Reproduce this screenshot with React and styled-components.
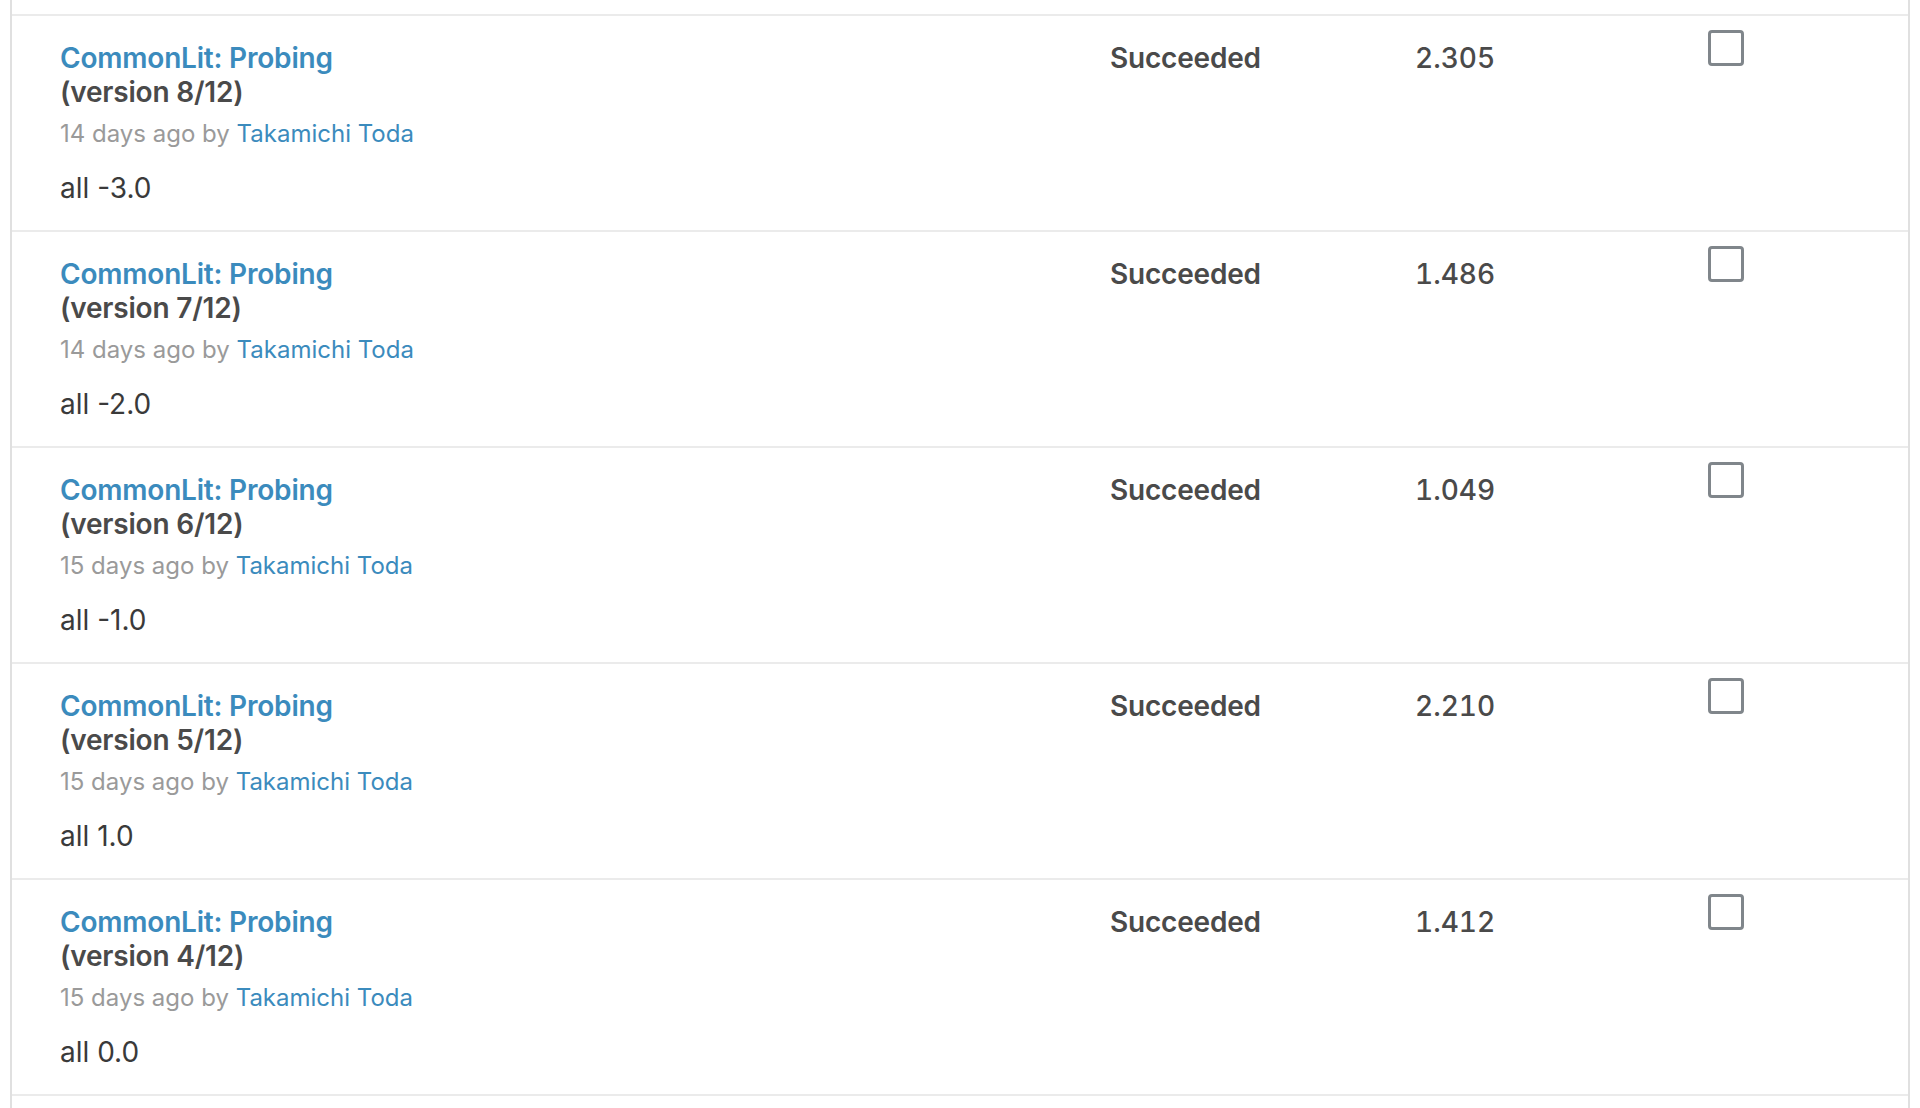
import React from "react";
import styled, { createGlobalStyle } from "styled-components";

const GlobalStyle = createGlobalStyle`
  html, body {
    margin: 0;
    padding: 0;
    background: #ffffff;
  }
  body {
    font-family: Inter, "Noto Sans", sans-serif;
    -webkit-font-smoothing: antialiased;
  }
`;

const Page = styled.div`
  height: 1108px;
  overflow: hidden;
  background: #fff;
`;

const List = styled.div`
  margin: 0 10px;
  min-height: 1108px;
  padding-top: 14px;
  border-left: 2px solid #e0e0e0;
  border-right: 2px solid #e0e0e0;
`;

const Row = styled.div`
  display: grid;
  grid-template-columns: 1050px 305px 293px 36px 1fr;
  padding: 25px 0 25px 48px;
  border-top: 2px solid #ebebeb;
  &:last-child {
    border-bottom: 2px solid #ebebeb;
  }
`;

const Info = styled.div`
  display: flex;
  flex-direction: column;
`;

const Title = styled.a`
  font-size: 28px;
  line-height: 34px;
  font-weight: 600;
  letter-spacing: -0.2px;
  color: #3b8bbd;
  text-decoration: none;
`;

const Version = styled.div`
  font-size: 28px;
  line-height: 34px;
  font-weight: 600;
  letter-spacing: -0.2px;
  color: #4a4a4a;
`;

const Meta = styled.div`
  margin-top: 8px;
  font-size: 24px;
  line-height: 34px;
  color: #9a9a9a;
`;

const Author = styled.a`
  color: #3b8bbd;
  text-decoration: none;
`;

const Note = styled.div`
  margin-top: 20px;
  font-size: 28px;
  line-height: 34px;
  color: #3a3a3a;
`;

const Status = styled.div`
  font-size: 28px;
  line-height: 34px;
  font-weight: 600;
  letter-spacing: -0.2px;
  color: #4a4a4a;
`;

const Score = styled.div`
  font-size: 28px;
  line-height: 34px;
  font-weight: 500;
  font-variant-numeric: tabular-nums;
  color: #4a4a4a;
`;

const Check = styled.span`
  display: block;
  box-sizing: border-box;
  width: 36px;
  height: 36px;
  margin-top: -11px;
  border: 3px solid #80868b;
  border-radius: 4px;
  background: #fff;
`;

const versions = [
  { v: 8, ago: 14, score: "2.305", note: "all -3.0" },
  { v: 7, ago: 14, score: "1.486", note: "all -2.0" },
  { v: 6, ago: 15, score: "1.049", note: "all -1.0" },
  { v: 5, ago: 15, score: "2.210", note: "all 1.0" },
  { v: 4, ago: 15, score: "1.412", note: "all 0.0" },
];

export default function App() {
  return (
    <Page>
      <GlobalStyle />
      <List>
        {versions.map((r) => (
          <Row key={r.v}>
            <Info>
              <Title href="#">CommonLit: Probing</Title>
              <Version>(version {r.v}/12)</Version>
              <Meta>
                {r.ago} days ago by <Author href="#">Takamichi Toda</Author>
              </Meta>
              <Note>{r.note}</Note>
            </Info>
            <Status>Succeeded</Status>
            <Score>{r.score}</Score>
            <div>
              <Check role="checkbox" aria-checked="false" />
            </div>
            <div />
          </Row>
        ))}
      </List>
    </Page>
  );
}
